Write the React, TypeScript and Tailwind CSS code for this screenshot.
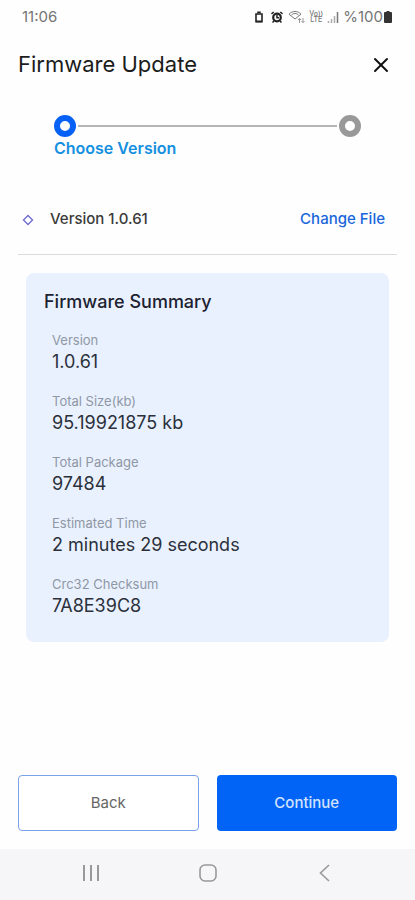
import { X } from "lucide-react"

const summary = [
  { label: "Version", value: "1.0.61" },
  { label: "Total Size(kb)", value: "95.19921875 kb" },
  { label: "Total Package", value: "97484" },
  { label: "Estimated Time", value: "2 minutes 29 seconds" },
  { label: "Crc32 Checksum", value: "7A8E39C8" },
]

const StatusBar = () => (
  <div className="h-[34px] px-[22px] flex items-center justify-between text-[15px] text-[#757575]">
    <span>11:06</span>
    <div className="flex items-center gap-1">
      <svg className="mr-0.5" width="10" height="12" viewBox="0 0 10 12" fill="none" stroke="#222" strokeWidth="1.6">
        <path d="M2 3h6v7.800H2z" />
        <path d="M3.2 1.400h3.600M2 10.400h6" />
      </svg>
      <svg width="14" height="12" viewBox="0 0 14 12" fill="none" stroke="#222">
        <circle cx="7" cy="6.500" r="3.800" strokeWidth="2.200" />
        <path d="M7 4v2.800h2M1.500 2.800l2.200-1.800M12.500 2.800 10.300 1M2.500 11.500l1.500-1.500M11.500 11.500 10 10" strokeWidth="1.5" />
      </svg>
      <svg width="17" height="14" viewBox="0 0 17 14" fill="none" stroke="#777">
        <path d="M1 4.2C4 .6 10 .6 13 4.2L7 9z" />
        <path d="M3.500 5c2-2 5-2 7 0" />
        <path d="M11.5 13V8.5M10 10l1.5-1.7L13 10M15 8v4.5M13.5 11l1.5 1.7 1.5-1.7" stroke="#999" />
      </svg>
      <span className="w-[14px] text-center text-[7px] leading-[6px] font-medium">Vo)) LTE</span>
      <svg width="12" height="12" viewBox="0 0 12 12" fill="none" stroke="#777">
        <path d="M1.5 12v-2M4.5 12V8M7.5 12V5" stroke="#aaa" strokeWidth="1.5" />
        <path d="M10.5 12V1" strokeWidth="1.5" />
      </svg>
      <div className="flex items-center">
        <span>%100</span>
        <svg width="10" height="12" viewBox="0 0 10 12" fill="#333">
          <path d="M3.5 0h3v1H8a1 1 0 0 1 1 1v9a1 1 0 0 1-1 1H2a1 1 0 0 1-1-1V2a1 1 0 0 1 1-1h1.500z" />
        </svg>
      </div>
    </div>
  </div>
)

const Stepper = () => (
  <div className="mt-5 px-9">
    <div className="flex items-center gap-0.5">
      <div className="size-[22px] rounded-full border-[6px] border-[#0761f5] bg-white"></div>
      <div className="h-0.5 grow bg-[#b5b5b5]"></div>
      <div className="size-[22px] rounded-full border-[6px] border-[#999999] bg-white"></div>
    </div>
    <div className="text-base leading-[22px] font-semibold text-[#1590e0]">Choose Version</div>
  </div>
)

const NavBar = () => (
  <nav className="h-[51px] pb-1 bg-[#f6f6f8] flex items-center justify-around px-8 text-[#999999]">
    <button aria-label="Recent apps">
      <svg width="20" height="20" viewBox="0 0 20 20" fill="none" stroke="currentColor" strokeWidth="2">
        <path d="M3 2v16M10 2v16M17 2v16" />
      </svg>
    </button>
    <button aria-label="Home">
      <svg width="20" height="20" viewBox="0 0 20 20" fill="none" stroke="currentColor" strokeWidth="1.6">
        <rect x="2" y="2" width="16" height="16" rx="5" />
      </svg>
    </button>
    <button aria-label="Go back">
      <svg width="20" height="20" viewBox="0 0 20 20" fill="none" stroke="currentColor" strokeWidth="1.6">
        <path d="M14 2 5.500 10l8.500 8" />
      </svg>
    </button>
  </nav>
)

const App = () => {
  return (
    <div className="min-h-screen flex flex-col bg-[#fefefe] font-['Inter',sans-serif]">
      <StatusBar />

      <main className="grow flex flex-col px-[18px]">
        <header className="h-[61px] flex items-center justify-between">
          <h1 className="text-[22px] text-[#1c1c1c]">Firmware Update</h1>
          <button aria-label="Close" className="mr-1">
            <X size={24} strokeWidth={2} color="#111" />
          </button>
        </header>

        <Stepper />

        <div className="mt-6 h-[72px] pt-0.5 pl-1 pr-3 flex items-center justify-between border-b border-[#dcdcde] text-[15px]">
          <div className="flex items-center gap-4">
            <svg width="12" height="12" viewBox="0 0 12 12" fill="none" stroke="#6d6bd0" strokeWidth="1.3">
              <path d="M6 1.500 10.500 6 6 10.500 1.500 6z" />
            </svg>
            <span className="font-medium text-[#3a3a3a]">Version 1.0.61</span>
          </div>
          <button className="font-medium text-[#1a66dc]">Change File</button>
        </div>

        <section className="mx-2 mt-[18px] px-[18px] pt-[17px] pb-6 rounded-lg bg-[#e9f1fe]">
          <h2 className="text-lg leading-6 font-medium text-[#1c2230]">Firmware Summary</h2>
          <dl className="mt-4 px-2 flex flex-col gap-[17px]">
            {summary.map((item) => (
              <div key={item.label}>
                <dt className="text-[13px] leading-5 text-[#8f97a5]">{item.label}</dt>
                <dd className="text-lg leading-6 text-[#2b303b]">{item.value}</dd>
              </div>
            ))}
          </dl>
        </section>

        <div className="mt-auto mb-[18px] pt-6 grid grid-cols-2 gap-[18px] text-[15px]">
          <button className="h-14 rounded border border-[#7ba1e8] bg-white text-[#666]">Back</button>
          <button className="h-14 rounded bg-[#0264f7] font-medium text-[#d3e3ff]">Continue</button>
        </div>
      </main>

      <NavBar />
    </div>
  )
}

export default App
